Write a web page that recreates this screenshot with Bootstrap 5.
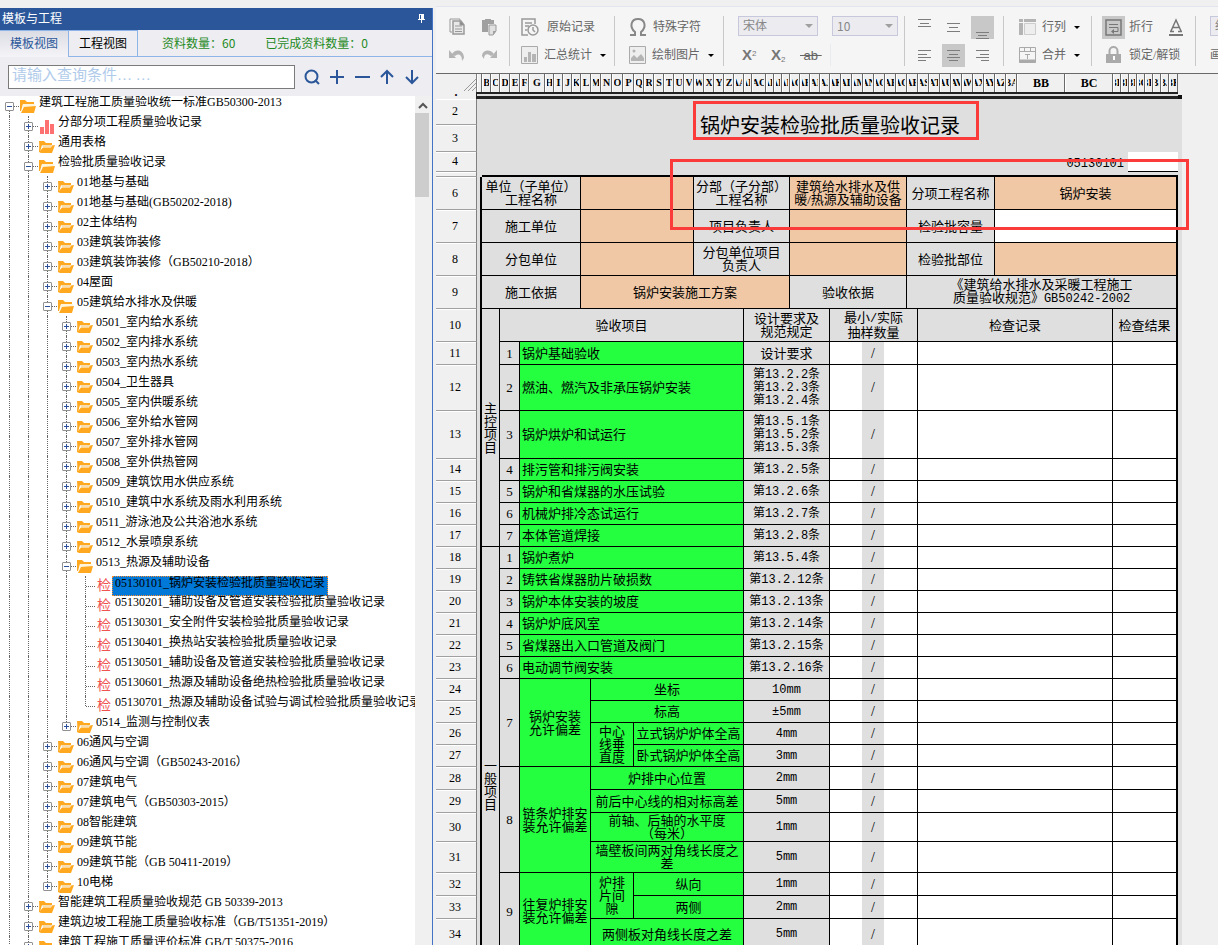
<!DOCTYPE html>
<html lang="zh-CN">
<head>
<meta charset="utf-8">
<meta name="viewport" content="width=device-width, initial-scale=1">
<title>模板与工程</title>
<link href="https://cdn.jsdelivr.net/npm/bootstrap@5.3.0/dist/css/bootstrap.min.css" rel="stylesheet">
<style>
body{background:#f0f0f0;color:#000;font:12px/14px "Liberation Serif","Noto Sans CJK SC",serif;padding-top:6px}
button,select,input{font:inherit}
.panel{width:433px;border-right:1px solid #4472c4;background:#eeeef2;margin-top:2px}
.panel-title{height:22px;background:#2b579a;padding:0 7px 0 2px}
.view-tabs{height:28px}
.view-tab{border:0;background:linear-gradient(#dcdce4,#f4f4f8);width:68px;color:#2b579a;border-top:1px solid #8fb4e8}
.view-tab.other{width:70px;background:#eeeef2;color:#000;border:1px solid #8fb4e8}
.tab-info{border-bottom:1px solid #8fb4e8;color:#1e8a1e;padding-left:24px;gap:30px;font-family:"Noto Sans CJK SC",sans-serif}
.search-bar{height:39px;padding:0 12px 0 8px}
.search-bar input{width:287px;height:24px;border:1px solid #7a7a7a;border-radius:0;padding:0 3px 3px;font-size:15px}
.search-bar input::placeholder{color:#b0cbea;opacity:1}
.ico-btn{border:0;background:none;padding:0;line-height:0;color:#7d7d7d}
.search-bar .ico-btn{color:#2b579a}
.scroller{width:17px;background:#f0f0f0}
.scroller i{display:block;height:84px;background:#cdcdcd;width:14px}
.tree-row{height:20px;white-space:nowrap}
.guide{flex:none;width:19px;height:20px;position:relative}
.guide::before{content:"";position:absolute;left:9px;top:0;bottom:0;border-left:1px dotted #666}
.guide.own::after{content:"";position:absolute;left:10px;right:0;top:10px;border-top:1px dotted #666}
.guide.first::before{top:10px}.guide.last::before{bottom:10px}
.toggler{position:absolute;left:5px;top:6px;z-index:1;width:9px;height:9px;padding:0;border:1px solid #919191;border-radius:1px;background:#fff;line-height:0}
.toggler::before,.toggler.plus::after{content:"";position:absolute;left:1px;top:3px;width:5px;height:1px;background:#2b4f9a}
.toggler.plus::after{left:3px;top:1px;width:1px;height:5px}
.node-ico{flex:none;width:16px;height:20px;margin-left:1px}
.check-mark{font-size:14px;line-height:19px;color:#f05050;width:16px;text-align:center}
.node-label{height:20px;line-height:13px;padding:0 2px;color:#000;text-decoration:none;border:1px solid transparent;border-width:0 1px}
.node-label.picked{background:#0078d7;border:1px dotted #ff8c2a;line-height:12px}
.desk{margin-left:3px}
.tools{height:68px;background:#f5f5f5;border-top:1px solid #e4e4ee;border-bottom:1px solid #696969;padding-top:9px;color:#666}
.tool-group{flex:none;height:50px;border-right:1px solid #c8c8c8}
.tool-line{height:22px;margin-bottom:6px;white-space:nowrap}
.tool-btn{border:0;background:none;padding:0;color:#666;display:flex;align-items:center;gap:6px}
.tool-btn .drop{border:3px solid transparent;border-top:3px solid #000;border-bottom:0;margin-left:2px}
.script-btn{border:0;background:none;padding:0;width:17px;text-align:left;color:#777;font:bold 15px/20px "Liberation Sans",sans-serif}
.script-btn sup,.script-btn sub{font-size:8px;font-weight:400}
.strike-btn{font:13px "Liberation Sans",sans-serif}
.sq{width:23px;height:23px;border:0;background:none;padding:0;line-height:0;color:#7d7d7d}
.sq.on{background:#c8c8c8}
.aligns{gap:6px}
.pick{position:relative}
.pick.face{width:80px;margin-right:14px}.pick.size{width:66px;font-family:"Noto Sans CJK SC",sans-serif}.pick.line{width:60px}
.pick select{height:20px;border:1px solid #c8c8dc;border-radius:0;background:#ebebf0;color:#888;padding:0 4px 1px;appearance:none;width:100%}
.pick::after{content:"";position:absolute;right:5px;top:8px;border:4px solid transparent;border-top-color:#a0a0a0;border-bottom:0}
.g1{width:74px;padding-left:13px}.g2{width:105px;padding-left:11px}.g3{width:109px;padding-left:14px}.g4{width:181px;padding-left:14px}
.g5{width:99px;padding-left:8px}.g6{width:88px;padding-left:15px}.g7{width:104px;padding-left:10px}.g8{padding-left:14px;border:0}
.col-heads{height:18px;background:#f0f0f0;font:bold 10px/18px "Liberation Serif",serif}
.corner{flex:none;width:41px;border-right:1px solid #808080}
.col-head{flex:none;display:flex;justify-content:center;overflow:hidden;border-right:1px solid #696969;border-left:1px solid #fff;padding:0 1px}
.col-head span{display:flex;justify-content:center;overflow:hidden;width:100%}
.col-head.wide{font-size:12px}
.freeze{height:7px}
.freeze .dot{width:40px;text-align:center;font:bold 12px/1px "Liberation Serif",serif}
.freeze .rule{width:702px;border:solid #222;border-width:2px 0 3px 1px;background:#dedede}
.freeze .knob{width:4px;height:4px;background:#111;margin-top:3px}
.grid-table{table-layout:fixed;width:746px;border-collapse:separate;border-spacing:0;background:#dfdfdf;font-size:13px;line-height:13px;font-family:"Liberation Serif","Noto Sans CJK SC",serif}
.grid-table td,.grid-table th{padding:0;text-align:center;vertical-align:middle;font-weight:400;overflow:hidden;border:0 solid #000;border-width:0 1px 1px 0}
.grid-table th{background:#f0f0f0;border-color:#a0a0a0;border-right-color:#808080;box-shadow:inset 0 1px #fff;font-size:12px;padding-right:2px}
.grid-table .edge{border-width:0 2px 0 0;background:#dfdfdf}
.grid-table .plain{border:0;white-space:nowrap}
.grid-table td.end{border-right-width:2px}
.grid-table td.top-line{border-bottom:2px solid #000}
.grid-table .peach{background:#f0c8a5}
.grid-table .paper{background:#fff}
.grid-table .lime{background:#24ff40}
.grid-table td.name{text-align:left;padding-left:2px}
.grid-table .clause,.mono{font-size:12px;font-family:"Liberation Mono","Noto Sans CJK SC",monospace}
.grid-table td.clause{padding-top:1px}
.grid-table .slash{border-right:0;font-size:14px}
.grid-table .nr{border-right:0}
.grid-table .upright{padding:0 2px}
.grid-table .doc-title{font-size:20px;line-height:24px}
.callout-box{position:absolute;border:3px solid #fb3a3a;pointer-events:none}
.box-title{left:257px;top:27px;width:286px;height:39px}
.box-fields{left:234px;top:85px;width:519px;height:71px}
</style>
</head>
<body class="vh-100 overflow-hidden">
<svg class="d-none">
<symbol id="folder" viewBox="0 0 16 14"><path d="M0 1h5l2 2h6v2H3L1 12z" fill="#ffa820"/><path d="M3 5h10l-1 2H4z" fill="#f6ddb0"/><path d="M0 2v10l2 1h11l3-8-3 .5-1 2H4L1 11z" fill="#ffa820"/></symbol>
<symbol id="folder-open" viewBox="0 0 16 14"><path d="M0 0h5l2 2h7v2H3L1 11H0z" fill="#ffa820"/><path d="M3 4h12l-1 3H5L2 9z" fill="#fff4dc"/><path d="M1 13l3-6 12-1-2 7z" fill="#ffa820"/></symbol>
<symbol id="bars" viewBox="0 0 16 14"><path d="M1 7h4v7H1zM6 0h4v14H6zM11 4h4v10h-4z" fill="#ff7070"/></symbol>
</svg>
<div class="d-flex h-100">
<aside class="panel d-flex flex-column flex-shrink-0">
  <header class="panel-title d-flex align-items-center justify-content-between text-white"><span>模板与工程</span>
    <button class="ico-btn" aria-label="固定"><svg width="7" height="9" viewBox="0 0 7 9" fill="#fff"><path d="M1 0h5v5h1v1H4v3H3V6H0V5h1zM2 1v4h1V1z" fill-rule="evenodd"/></svg></button></header>
  <div class="view-tabs d-flex"><button class="view-tab">模板视图</button><button class="view-tab other">工程视图</button>
    <div class="tab-info d-flex align-items-center flex-grow-1"><span>资料数量：60</span><span>已完成资料数量：0</span></div></div>
  <div class="search-bar d-flex align-items-center justify-content-between">
    <input type="text" class="form-control flex-shrink-0" placeholder="请输入查询条件… …" aria-label="查询条件">
    <button class="ico-btn" aria-label="搜索"><svg width="16" height="16" fill="none" stroke="currentColor" stroke-width="2"><circle cx="7.500" cy="7.500" r="6"/><path d="M11 11l4 4"/></svg></button>
    <button class="ico-btn" aria-label="展开"><svg width="16" height="16" stroke="currentColor" stroke-width="2"><path d="M1 8h14M8 1v14"/></svg></button>
    <button class="ico-btn" aria-label="收起"><svg width="16" height="16" stroke="currentColor" stroke-width="2"><path d="M1 8h15"/></svg></button>
    <button class="ico-btn" aria-label="上移"><svg width="16" height="16" fill="none" stroke="currentColor" stroke-width="2"><path d="M8 15V2M2 8l6-6 6 6"/></svg></button>
    <button class="ico-btn" aria-label="下移"><svg width="16" height="16" fill="none" stroke="currentColor" stroke-width="2"><path d="M8 1v13M2 8l6 6 6-6"/></svg></button>
  </div>
  <div class="d-flex flex-grow-1 overflow-hidden">
    <div id="tree" class="flex-grow-1 bg-white overflow-hidden"></div>
    <div class="scroller flex-shrink-0 pe-1"><svg class="d-block" width="15" height="17" fill="none" stroke="#555" stroke-width="2"><path d="M4 12l4-4 4 4"/></svg><i></i></div>
  </div>
</aside>
<main class="desk flex-grow-1 overflow-hidden">
  <div class="tools d-flex">
    <div class="tool-group g1">
      <div class="tool-line d-flex align-items-center gap-3"><button class="ico-btn" aria-label="复制"><svg width="16" height="18" fill="none" stroke="#999"><path d="M3 14H1V1h10v2" /><path d="M4 3h8l3 4v9H4z" fill="#e8e8e8" stroke-width="1.500"/><path d="M6 8h7M6 11h7M6 13.500h7"/><path d="M11 3v4h4" fill="#888"/></svg></button>
      <button class="ico-btn" aria-label="粘贴"><svg width="16" height="18" fill="#a0a0a0"><path d="M1 2h3V1h6v1h3v4H7v8H1z"/><path d="M8 7h7v6l-3 4H8z" fill="#e0e0e0" stroke="#999"/><path d="M12 17v-4h3z"/></svg></button></div>
      <div class="tool-line d-flex align-items-center gap-3"><button class="ico-btn" aria-label="撤销"><svg width="16" height="14" fill="#b4b4b4"><path d="M0 2l7 8H0zM3 6c4-6 12-4 12 4l-2 3c0-6-3-8-7-5z"/></svg></button>
      <button class="ico-btn" aria-label="重做"><svg width="16" height="14" fill="#b4b4b4"><path d="M16 2v8H9zM13 6C9 0 1 2 1 8l2 3c0-5 3-6 7-3z"/></svg></button></div>
    </div>
    <div class="tool-group g2">
      <div class="tool-line d-flex"><button class="tool-btn gap-2"><svg width="18" height="20" fill="none" stroke="#999" stroke-width="1.500"><path d="M7 18H1V2h13v5M4 6h7M4 9h4M4 13h2"/><circle cx="12" cy="13" r="5" fill="#f5f5f5"/><path d="M12 10v3l2 2"/></svg>原始记录</button></div>
      <div class="tool-line d-flex"><button class="tool-btn"><svg width="17" height="18"><path d="M.5.5h16v17H.5z" fill="#eee" stroke="#aaa"/><path d="M3 11h3v5H3zM7 6h3v10H7zM11 8h4v8h-4z" fill="#b4b4b4"/></svg>汇总统计<span class="drop"></span></button></div>
    </div>
    <div class="tool-group g3">
      <div class="tool-line d-flex"><button class="tool-btn"><svg width="18" height="18" fill="none" stroke="#888" stroke-width="2"><path d="M1 17h5v-3C0 9 2 1 9 1s9 8 3 13v3h5"/></svg>特殊字符</button></div>
      <div class="tool-line d-flex"><button class="tool-btn"><svg width="17" height="18"><path d="M.5.5h16v17H.5z" fill="#eee" stroke="#aaa"/><path d="M2 15V12l3-3 3 3 4-4 3 4v3z" fill="#b4b4b4"/><circle cx="5" cy="5" r="1.500" fill="#b4b4b4"/></svg>绘制图片<span class="drop"></span></button></div>
    </div>
    <div class="tool-group g4">
      <div class="tool-line d-flex"><div class="pick face"><select aria-label="字体"><option>宋体</option></select></div><div class="pick size"><select aria-label="字号"><option>10</option></select></div></div>
      <div class="tool-line d-flex align-items-center">
        <button class="script-btn ms-1 me-2" aria-label="上标">X<sup>2</sup></button>
        <button class="script-btn ms-1 me-2" aria-label="下标">X<sub>2</sub></button>
        <button class="tool-btn strike-btn ms-1 me-2 text-decoration-line-through">&nbsp;ab&nbsp;</button><span class="border-start border-secondary-subtle h-100"></span></div>
    </div>
    <div class="tool-group g5">
      <div class="tool-line aligns d-flex"><button class="sq" aria-label="顶端"><svg width="13" height="22" stroke="currentColor"><path d="M0 2.500h13M2 6.500h9M0 9.500h13"/></svg></button><button class="sq" aria-label="居中"><svg width="13" height="22" stroke="currentColor"><path d="M0 6.500h13M2 10.500h9M0 14.500h13"/></svg></button><button class="sq on" aria-label="底端"><svg width="13" height="22" stroke="currentColor"><path d="M0 15.500h13M2 18.500h9M0 21.500h13"/></svg></button></div>
      <div class="tool-line aligns d-flex"><button class="sq" aria-label="左对齐"><svg width="13" height="12" stroke="currentColor"><path d="M0 .5h13M0 4.500h9M0 7.500h13M0 10.500h8"/></svg></button><button class="sq on" aria-label="水平居中"><svg width="13" height="12" stroke="currentColor"><path d="M0 .5h13M2 4.500h9M0 7.500h13M2 10.500h9"/></svg></button><button class="sq" aria-label="右对齐"><svg width="13" height="12" stroke="currentColor"><path d="M0 .5h13M4 4.500h9M0 7.500h13M5 10.500h8"/></svg></button></div>
    </div>
    <div class="tool-group g6">
      <div class="tool-line d-flex"><button class="tool-btn"><svg width="17" height="18" fill="#b4b4b4"><path d="M0 1h4v3H0zM5 1h12v3H5zM0 5h4v12H0z"/><path d="M5.500 5.500h11v11h-11z" fill="#eee" stroke="#ccc"/></svg>行列<span class="drop"></span></button></div>
      <div class="tool-line d-flex"><button class="tool-btn"><svg width="17" height="18" fill="none" stroke="#aaa"><path d="M.5 1.500h16v15H.5zM0 5.500h17M5.500 1v4M11.500 1v4"/><path d="M6 8.500h5M8.500 8v5"/><path d="M0 15h17" stroke-width="3"/></svg>合并<span class="drop"></span></button></div>
    </div>
    <div class="tool-group g7">
      <div class="tool-line d-flex align-items-center"><button class="sq on" aria-label="折行"><svg width="17" height="17" fill="none" stroke="#777"><path d="M1 1h15v15H1z" stroke-width="1.500"/><path d="M4 5.500h9M4 8.500h9v4H8"/><path d="M9 10v5l-3-2.500z" fill="#777" stroke="none"/></svg></button><span class="mx-1">折行</span>
      <button class="ico-btn ms-2 ps-1" aria-label="字体颜色"><svg width="14" height="18" fill="none" stroke="#777"><path d="M2 13L7 2l5 11M4 9.500h6M1 13.500h4M9 13.500h4" stroke-width="1.500"/><path d="M0 17h14" stroke-width="2"/></svg></button></div>
      <div class="tool-line d-flex ms-1"><button class="tool-btn gap-2"><svg width="15" height="18"><path d="M3.500 8V5a4 4 0 018 0v3" fill="none" stroke="#aaa" stroke-width="2"/><path d="M0 8h15v9H0z" fill="#aaa"/><path d="M7 10h2v4H7z" fill="#fff"/></svg><span>锁定/解锁</span></button></div>
    </div>
    <div class="tool-group g8"><div class="tool-line"><div class="pick line"><select aria-label="线型"><option>细线</option></select></div></div><div class="tool-line d-flex"><button class="tool-btn">画线</button></div></div>
  </div>
  <div class="position-relative">
    <div class="col-heads d-flex" id="heads"><div class="corner text-end"><svg class="d-block ms-auto" width="12" height="18" stroke="#999"><path d="M0 17L12 5M4 17l8-8M8 17l4-4"/></svg></div></div>
    <div class="freeze d-flex"><span class="dot">.</span><span class="rule"></span><span class="knob"></span></div>
    <table class="grid-table">
      <colgroup id="cols"></colgroup>
      <tbody id="sheet">
      <tr data-h="26"><td colspan="17" rowspan="2" class="plain doc-title">锅炉安装检验批质量验收记录</td></tr>
      <tr data-h="27"></tr>
      <tr data-h="20"><td colspan="14" class="plain"></td><td colspan="2" class="plain mono"><span class="d-flex justify-content-end pe-1 pt-1">05130101</span></td><td class="paper nr"></td></tr>
      <tr data-h="5"><td colspan="17" class="plain top-line"></td></tr>
      <tr data-h="33"><td colspan="3">单位（子单位）<br>工程名称</td><td colspan="3" class="peach"></td><td colspan="2">分部（子分部）<br>工程名称</td><td colspan="4" class="peach text-nowrap">建筑给水排水及供<br>暖/热源及辅助设备</td><td colspan="2">分项工程名称</td><td colspan="3" class="peach end">锅炉安装</td></tr>
      <tr data-h="33"><td colspan="3">施工单位</td><td colspan="3" class="peach"></td><td colspan="2">项目负责人</td><td colspan="4" class="peach"></td><td colspan="2">检验批容量</td><td colspan="3" class="paper end"></td></tr>
      <tr data-h="33"><td colspan="3">分包单位</td><td colspan="3" class="peach"></td><td colspan="2">分包单位项目<br>负责人</td><td colspan="4" class="peach"></td><td colspan="2">检验批部位</td><td colspan="3" class="peach end"></td></tr>
      <tr data-h="33"><td colspan="3">施工依据</td><td colspan="5" class="peach">锅炉安装施工方案</td><td colspan="4">验收依据</td><td colspan="5" class="end">《建筑给水排水及采暖工程施工<br>质量验收规范》<span class="mono">GB50242-2002</span></td></tr>
      <tr data-h="33"><td rowspan="8" class="upright">主控项目</td><td colspan="6">验收项目</td><td colspan="2">设计要求及<br>规范规定</td><td colspan="4">最小<span class="mono">/</span>实际<br>抽样数量</td><td colspan="2">检查记录</td><td colspan="2" class="end">检查结果</td></tr>
      <tr data-h="23" data-s><td>1</td><td colspan="5" class="lime name">锅炉基础验收</td><td colspan="2">设计要求</td></tr>
      <tr data-h="46" data-s><td>2</td><td colspan="5" class="lime name">燃油、燃汽及非承压锅炉安装</td><td colspan="2" class="clause">第13.2.2条<br>第13.2.3条<br>第13.2.4条</td></tr>
      <tr data-h="48" data-s><td>3</td><td colspan="5" class="lime name">锅炉烘炉和试运行</td><td colspan="2" class="clause">第13.5.1条<br>第13.5.2条<br>第13.5.3条</td></tr>
      <tr data-h="22" data-s><td>4</td><td colspan="5" class="lime name">排污管和排污阀安装</td><td colspan="2" class="clause">第13.2.5条</td></tr>
      <tr data-h="22" data-s><td>5</td><td colspan="5" class="lime name">锅炉和省煤器的水压试验</td><td colspan="2" class="clause">第13.2.6条</td></tr>
      <tr data-h="22" data-s><td>6</td><td colspan="5" class="lime name">机械炉排冷态试运行</td><td colspan="2" class="clause">第13.2.7条</td></tr>
      <tr data-h="22" data-s><td>7</td><td colspan="5" class="lime name">本体管道焊接</td><td colspan="2" class="clause">第13.2.8条</td></tr>
      <tr data-h="22" data-s><td rowspan="18" class="upright">一般项目</td><td>1</td><td colspan="5" class="lime name">锅炉煮炉</td><td colspan="2" class="clause">第13.5.4条</td></tr>
      <tr data-h="22" data-s><td>2</td><td colspan="5" class="lime name">铸铁省煤器肋片破损数</td><td colspan="2" class="clause">第13.2.12条</td></tr>
      <tr data-h="22" data-s><td>3</td><td colspan="5" class="lime name">锅炉本体安装的坡度</td><td colspan="2" class="clause">第13.2.13条</td></tr>
      <tr data-h="22" data-s><td>4</td><td colspan="5" class="lime name">锅炉炉底风室</td><td colspan="2" class="clause">第13.2.14条</td></tr>
      <tr data-h="22" data-s><td>5</td><td colspan="5" class="lime name">省煤器出入口管道及阀门</td><td colspan="2" class="clause">第13.2.15条</td></tr>
      <tr data-h="22" data-s><td>6</td><td colspan="5" class="lime name">电动调节阀安装</td><td colspan="2" class="clause">第13.2.16条</td></tr>
      <tr data-h="22" data-s><td rowspan="4">7</td><td colspan="2" rowspan="4" class="lime">锅炉安装<br>允许偏差</td><td colspan="3" class="lime">坐标</td><td colspan="2" class="clause">10mm</td></tr>
      <tr data-h="22" data-s><td colspan="3" class="lime">标高</td><td colspan="2" class="clause">±5mm</td></tr>
      <tr data-h="22" data-s><td rowspan="2" class="lime">中心<br>线垂<br>直度</td><td colspan="2" class="lime">立式锅炉炉体全高</td><td colspan="2" class="clause">4mm</td></tr>
      <tr data-h="22" data-s><td colspan="2" class="lime">卧式锅炉炉体全高</td><td colspan="2" class="clause">3mm</td></tr>
      <tr data-h="23" data-s><td rowspan="4">8</td><td colspan="2" rowspan="4" class="lime">链条炉排安<br>装允许偏差</td><td colspan="3" class="lime">炉排中心位置</td><td colspan="2" class="clause">2mm</td></tr>
      <tr data-h="23" data-s><td colspan="3" class="lime">前后中心线的相对标高差</td><td colspan="2" class="clause">5mm</td></tr>
      <tr data-h="29" data-s><td colspan="3" class="lime">前轴、后轴的水平度<br>（每米）</td><td colspan="2" class="clause">1mm</td></tr>
      <tr data-h="31" data-s><td colspan="3" class="lime">墙壁板间两对角线长度之<br>差</td><td colspan="2" class="clause">5mm</td></tr>
      <tr data-h="23" data-s><td rowspan="3">9</td><td colspan="2" rowspan="3" class="lime">往复炉排安<br>装允许偏差</td><td rowspan="2" class="lime">炉排<br>片间<br>隙</td><td colspan="2" class="lime">纵向</td><td colspan="2" class="clause">1mm</td></tr>
      <tr data-h="23" data-s><td colspan="2" class="lime">两侧</td><td colspan="2" class="clause">2mm</td></tr>
      <tr data-h="31" data-s><td colspan="3" class="lime">两侧板对角线长度之差</td><td colspan="2" class="clause">5mm</td></tr>
      <tr data-h="74" data-s><td></td><td colspan="5" class="lime"></td><td colspan="2"></td></tr>
      </tbody>
    </table>
    <div class="callout-box box-title"></div>
    <div class="callout-box box-fields"></div>
  </div>
</main>
</div>
<script src="https://cdn.jsdelivr.net/npm/bootstrap@5.3.0/dist/js/bootstrap.bundle.min.js"></script>
<script>
// Tree: level, state, label; state: + closed, - open, b chart, c checklist
const nodes = `0-建筑工程施工质量验收统一标准GB50300-2013
1b分部分项工程质量验收记录
1+通用表格
1-检验批质量验收记录
2+01地基与基础
2+01地基与基础(GB50202-2018)
2+02主体结构
2+03建筑装饰装修
2+03建筑装饰装修（GB50210-2018）
2+04屋面
2-05建筑给水排水及供暖
3+0501_室内给水系统
3+0502_室内排水系统
3+0503_室内热水系统
3+0504_卫生器具
3+0505_室内供暖系统
3+0506_室外给水管网
3+0507_室外排水管网
3+0508_室外供热管网
3+0509_建筑饮用水供应系统
3+0510_建筑中水系统及雨水利用系统
3+0511_游泳池及公共浴池水系统
3+0512_水景喷泉系统
3-0513_热源及辅助设备
4c05130101_锅炉安装检验批质量验收记录
4c05130201_辅助设备及管道安装检验批质量验收记录
4c05130301_安全附件安装检验批质量验收记录
4c05130401_换热站安装检验批质量验收记录
4c05130501_辅助设备及管道安装检验批质量验收记录
4c05130601_热源及辅助设备绝热检验批质量验收记录
4c05130701_热源及辅助设备试验与调试检验批质量验收记录
3+0514_监测与控制仪表
2+06通风与空调
2+06通风与空调（GB50243-2016）
2+07建筑电气
2+07建筑电气（GB50303-2015）
2+08智能建筑
2+09建筑节能
2+09建筑节能（GB 50411-2019）
2+10电梯
1+智能建筑工程质量验收规范 GB 50339-2013
1+建筑边坡工程施工质量验收标准（GB/T51351-2019）
1+建筑工程施工质量评价标准 GB/T 50375-2016`.split('\n').map(s => [+s[0], s[1], s.slice(2)]);
document.getElementById('tree').innerHTML = nodes.map(([lv, st, text], i) => {
  const next = nodes[i + 1];
  const last = next && next[0] < lv ? ' last' : '';
  const toggler = st === 'c' ? '' : `<button class="toggler${st === '-' ? '' : ' plus'}" aria-label="展开或收起"></button>`;
  const icon = st === 'c' ? '<span class="node-ico check-mark">检</span>'
    : `<svg class="node-ico" viewBox="0 -4 16 20"><use href="#${st === 'b' ? 'bars' : st === '-' ? 'folder-open' : 'folder'}" width="16" height="14"/></svg>`;
  return `<div class="tree-row d-flex">${'<span class="guide"></span>'.repeat(lv)}<span class="guide own${i ? '' : ' first'}${last}">${toggler}</span>${icon}<a href="#" class="node-label${i === 24 ? ' picked' : ''}">${text}</a></div>`;
}).join('');

// Column headings B..BK with their widths
const widths = [9,9,10,10,9,16,9,9,9,9,10,10,11,11,11,10,10,10,10,10,10,10,10,10,10,10,8,14,8,8,8,10,10,10,10,
  ...Array(17).fill(11),48,48,8,8,8,8,8,8,8,9];
const letter = n => (n > 25 ? String.fromCharCode(64 + Math.floor(n / 26)) : '') + String.fromCharCode(65 + n % 26);
document.getElementById('heads').insertAdjacentHTML('beforeend', '<div class="col-head" style="width:5px"></div>' +
  widths.map((w, i) => `<div class="col-head${w > 40 ? ' wide' : ''}" style="width:${w}px"><span>${letter(i + 1)}</span></div>`).join(''));
document.getElementById('cols').innerHTML = [41,5,18,20,61,10,43,60,50,46,40,32,22,23,11,77,118,15,50,4]
  .map(w => `<col style="width:${w}px">`).join('');

// Row numbers, result cells and row heights
document.querySelectorAll('#sheet tr').forEach((tr, i) => {
  tr.style.height = tr.dataset.h + 'px';
  if ('s' in tr.dataset) tr.insertAdjacentHTML('beforeend', '<td class="paper nr"></td><td class="slash">/</td><td colspan="2" class="paper"></td><td colspan="2" class="paper"></td><td colspan="2" class="paper end"></td>');
  tr.insertAdjacentHTML('afterbegin', `<th scope="row">${i === 3 ? '' : i + 2}</th><td class="${i < 4 ? 'plain' : 'edge'}"></td>`);
  tr.insertAdjacentHTML('beforeend', '<td class="plain"></td>');
});
</script>
</body>
</html>
